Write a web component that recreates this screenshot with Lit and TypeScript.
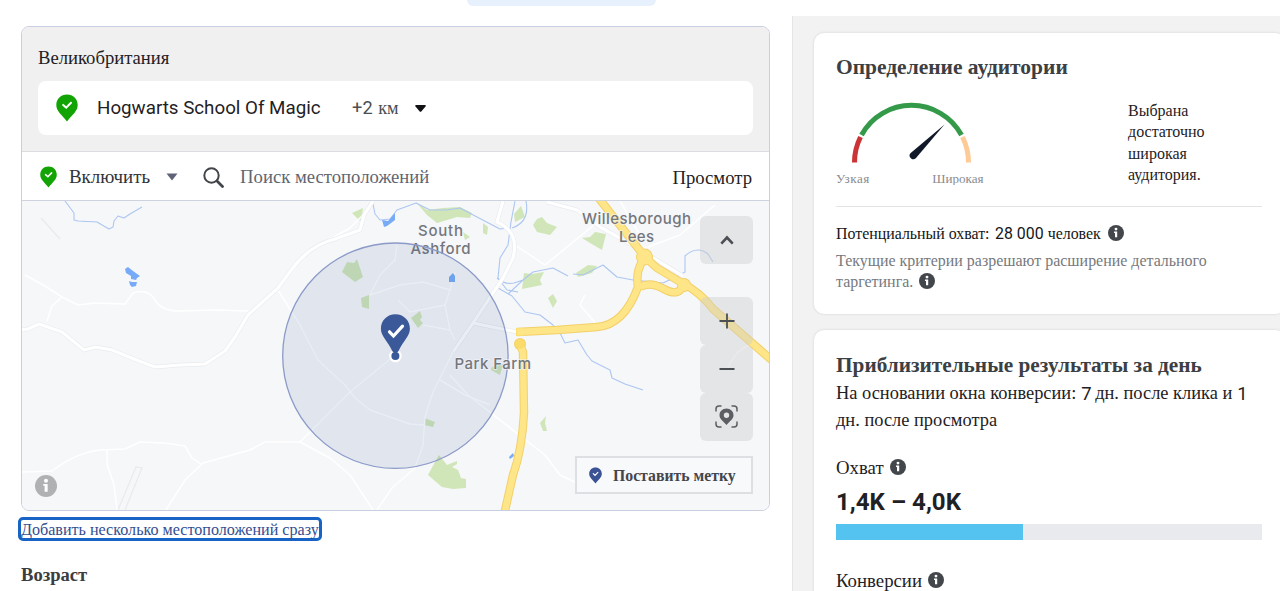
import { LitElement, html, css, svg } from "lit";
import { customElement, property } from "lit/decorators.js";

@customElement("info-dot")
class InfoDot extends LitElement {
  static styles = css`
    :host { display: block; width: 16px; height: 16px; flex: none; }
    .icon { display: block; width: 100%; height: 100%; }
  `;
  @property() tone = "#43474c";
  render() {
    return html`<svg class="icon" viewBox="0 0 16 16">
      <circle cx="8" cy="8" r="8" fill=${this.tone} />
      <circle cx="8" cy="4.1" r="1.45" fill="#fff" />
      <path d="M6 6.500h3.200v5.700H7V7.900H6z" fill="#fff" />
    </svg>`;
  }
}

@customElement("check-pin")
class CheckPin extends LitElement {
  static styles = css`
    :host { display: block; flex: none; }
    .icon { display: block; width: 100%; height: 100%; }
  `;
  @property() tone = "#12a404";
  render() {
    return html`<svg class="icon" viewBox="0 0 22 28">
      <path d="M11 .5C4.900.5.300 5 .300 11c0 6 5.200 9.500 10.700 16.500C16.500 20.500 21.700 17 21.700 11 21.700 5 17.100.5 11 .5z" fill=${this.tone} />
      <path d="M7.200 10.900l3 2.800 4.800-5" fill="none" stroke="#fff" stroke-width="2" stroke-linecap="round" />
    </svg>`;
  }
}

const PARKS = [
  "352,213 363,208 361,222", "416,202 427,210 443,208 460,207 472,213 470,218 457,217 437,223 427,215",
  "483,223 488,227 487,235 483,233", "463,232 470,237 465,240", "342,272 347,262 354,263 357,259 363,277 355,282",
  "361,298 369,295 369,309 362,307", "411,318 420,311 422,317 420,320 423,323 418,328", "492,367 503,364 500,375 491,370",
  "424,418 435,422 433,427 424,425", "428,475 435,462 439,455 447,465 457,461 457,464 452,467 458,470 461,478 466,479 466,488 453,489 442,487",
  "540,423 546,416 545,423 547,431 543,431", "533,225 537,219 542,217 547,223 557,227 550,235 537,232",
  "582,238 590,237 595,232 606,234 602,250 590,243", "524,273 532,274 544,272 540,280 542,285 522,289", "576,273 588,265 597,266 592,273 578,277",
  "548,298 553,294 557,301 553,308", "514,214 521,206 525,217 515,222",
];
const WATER = [
  "125,269 128,267 133,271 140,276 137,278 136,280 131,279 131,276 126,273", "129,281 132,282 137,282 136,286 132,287 130,285",
  "382,220 388,221 395,213 395,220 387,226 384,227", "449,277 453,273 455,276 455,282 449,282", "509,457 513,453 514,456 510,459",
];
const RIVERS = [
  "M65,201L74,213 74,220 78,221 97,222 109,229 113,227 114,221 118,216 124,218 130,214 142,207",
  "M373,204L375,214 380,220 390,219 397,210 416,203 430,210 447,210 460,208 477,217 500,229 508,228",
  "M515,201L511,222 508,245 500,258 498,278 507,290 518,292",
  "M526,201Q530,222 512,228",
  "M497,278Q505,285 514,283L523,280 533,272 553,268 568,276M508,294L523,280",
  "M498,288L512,296 525,312 540,315 553,325 560,333 565,343 578,340 587,355 592,361 610,370 612,378 625,384 643,390",
  "M573,274L583,275 603,265 617,277 633,280 663,283 680,275 685,272 685,256 Q697,245 708,254L713,262",
];
const ROADS = [
  "M21,330L28,329 39,324 62,332 84,350 96,347 112,350 134,359 155,367 180,365 205,364 225,351 235,337 248,315 278,288 292,269Q310,245 335,239L360,230 364,215 373,201",
  "M503,201L497,222 Q520,232 513,258L503,278 473,323 453,352",
  "M473,323L517,332",
  "M547,202L577,210 600,227 620,238 683,276",
];
const LANES = [
  "M25,275L45,286 62,297 78,305 95,303 125,304 133,293Q148,288 155,300T182,311L215,310 249,311",
  "M62,297L52,306 47,321", "M21,472L52,471Q75,453 100,450L125,449 140,442 165,443 185,446 192,458 201,464",
  "M107,450V464L114,485 117,510", "M166,510L185,480 203,463 250,450 265,442 300,442 330,458 350,475 373,510",
  "M377,510L392,488 415,468 423,445 425,417 433,392 453,352", "M300,442L350,392 395,355",
  "M278,290L300,325 318,360 345,385 355,398 370,410 410,424 425,425", "M397,245L395,260 380,275 370,295 400,285 423,282 450,290 445,305 410,312 398,300",
  "M445,305L450,330 423,325M450,290L455,272M450,330L455,340", "M285,280L310,250 350,228 363,215",
  "M450,375L468,395 500,420 545,455 560,475 575,482", "M515,245L545,265 600,220M585,295L580,305 597,325M640,250L680,235 715,205",
  "M727,370Q735,350 750,345M440,380L465,395 490,405M620,201L640,235",
];
const HIGHWAYS = [
  "M597,196L645,257 657,268 682,283 Q700,292 713,309L775,363",
  "M645,257Q635,270 638,287Q624,325 597,327L557,330 517,332",
  "M640,287Q650,281 664,289T683,286",
  "M519,342L523,352 524,413Q522,450 513,475L504,515",
];

@customElement("area-map")
class AreaMap extends LitElement {
  static styles = css`
    :host { display: block; width: 748px; height: 309px; }
    .map { display: block; }
    .label { font: 500 15px Inter, "Liberation Sans", sans-serif; fill: #74767c; stroke: #f5f6f9; stroke-width: 2px; stroke-opacity: .6; paint-order: stroke; }
  `;
  render() {
    const road = (d: string, color: string, w: number) =>
      svg`<path d=${d} fill="none" stroke=${color} stroke-width=${w} stroke-linejoin="round" />`;
    return html`<svg class="map" width="748" height="309" viewBox="22 201 748 309">
      <rect x="21" y="200" width="750" height="312" fill="#f5f7f9" />
      <path d="M41,218L60,239M118,510L136,467 142,468 125,510" fill="none" stroke="#e9eaee" stroke-width="1.200" />
      ${PARKS.map((p) => svg`<polygon points=${p} fill="#d0e6b8" />`)}
      ${LANES.map((d) => road(d, "#fff", 1.5))}
      ${RIVERS.map((d) => road(d, "#adc6f1", 1.1))}
      ${WATER.map((p) => svg`<polygon points=${p} fill="#77abf8" />`)}
      ${ROADS.map((d) => road(d, "#e9ebf0", 4.4))}
      ${ROADS.map((d) => road(d, "#fff", 3.2))}
      ${HIGHWAYS.map((d) => road(d, "#f3d06a", 8.4))}
      <circle cx="644.500" cy="257" r="8.500" fill="#f3d06a" /><circle cx="684" cy="285" r="7" fill="#f3d06a" />
      <rect x="516" y="328" width="8" height="8" fill="#fbdc6b" /><circle cx="520" cy="344" r="6" fill="#f3d06a" />
      ${HIGHWAYS.map((d) => road(d, "#fee587", 6.4))}
      <circle cx="644.500" cy="257" r="7.500" fill="#fee587" /><circle cx="684" cy="285" r="6" fill="#fee587" />
      <circle cx="520" cy="344" r="5" fill="#fbdc6b" />
      <text class="label" x="418" y="236" textLength="45">South</text>
      <text class="label" x="410.500" y="254" textLength="60">Ashford</text>
      <text class="label" x="582" y="224" textLength="109">Willesborough</text>
      <text class="label" x="619" y="242" textLength="35">Lees</text>
      <circle cx="395.400" cy="355.700" r="112.700" fill="#3b5998" fill-opacity=".11" stroke="#8c9ac8" stroke-width="1.300" />
      <text class="label" x="454.500" y="369" textLength="76.500">Park Farm</text>
      <circle cx="395.400" cy="356" r="6.300" fill="#fff" />
      <circle cx="395.400" cy="356" r="4" fill="#3b5998" />
      <path d="M395.400 314.300c-8.300 0-14.500 6.200-14.500 14.500 0 7.500 7 12.500 11.500 22.500l3 3 3-3c4.500-10 11.500-15 11.500-22.500 0-8.300-6.200-14.500-14.500-14.500z" fill="#3b5998" />
      <path d="M389.500 331.800l4 4.200 9-9.800" fill="none" stroke="#fff" stroke-width="3.200" stroke-linecap="round" />
    </svg>`;
  }
}

@customElement("app-root")
class AppRoot extends LitElement {
  static styles = css`
    :host { display: block; width: 1280px; height: 591px; overflow: hidden; background: #fff; font-family: "Liberation Serif", serif; color: #1f2124; }
    * { box-sizing: border-box; }
    .page { display: flex; height: 591px; position: relative; }
    .tab { position: absolute; left: 467px; top: -10px; width: 189px; height: 16px; border-radius: 6px; background: #e7f1fe; }
    .main { width: 792px; flex: none; padding: 26px 0 0 21px; display: flex; flex-direction: column; align-items: flex-start; }
    .t { display: inline-block; white-space: pre; }
    .rb { font-family: Roboto, sans-serif; }
    .panel { width: 749px; height: 485px; border: 1px solid #c9cfe0; border-radius: 8px; overflow: hidden; display: flex; flex-direction: column; }
    .head { height: 125px; background: #f0f0f0; border-bottom: 1px solid #dcdde0; padding: 17px 16px 0; }
    .country { font-size: 18.650px; line-height: 27px; display: block; width: max-content; }
    .place { height: 54px; margin-top: 10px; background: #fff; border-radius: 8px; display: flex; align-items: center; padding-left: 18px; }
    .pin1 { width: 22px; height: 28px; }
    .name { font-size: 18.750px; margin-left: 19px; }
    .radius { margin-left: 31.500px; color: #4b4f54; display: flex; align-items: baseline; }
    .two { font-size: 18.200px; }
    .km { font-size: 18.200px; margin-left: 5.500px; }
    .caret { margin-left: 15.500px; }
    .search { height: 49px; background: #fff; border-bottom: 1px solid #ced3df; display: flex; align-items: center; padding: 2px 17px 0 18px; }
    .pin2 { width: 17px; height: 22px; }
    .incl { font-size: 18.900px; margin-left: 12px; color: #303338; }
    .caret2 { margin-left: 16px; }
    .glass { margin-left: 25px; }
    .ph { font-size: 18.700px; margin-left: 16px; color: #5f6670; }
    .view { font-size: 18.700px; margin-left: auto; padding-top: 2px; }
    .canvas { position: relative; height: 309px; }
    .ctl { position: absolute; left: 678px; width: 53px; height: 48px; border-radius: 6px; background: rgba(205, 206, 208, .42); display: flex; align-items: center; justify-content: center; }
    .up { top: 15px; } .plus { top: 96px; } .minus { top: 144px; } .locate { top: 191.500px; }
    .drop { position: absolute; left: 553px; top: 255px; width: 178px; height: 38px; border: 2px solid #dddfe3; background: #f8f9fb; display: flex; align-items: center; padding-left: 12px; }
    .pin3 { width: 13px; height: 17px; }
    .droptext { font-size: 15.750px; font-weight: 700; color: #43464b; margin-left: 11px; padding-top: 1px; }
    .mapinfo { position: absolute; left: 13px; top: 274px; width: 22px; height: 22px; }
    .link { margin: 6px 0 0 -3px; width: 304px; height: 24px; border: 3px solid #1763c6; border-radius: 5px; line-height: 19px; font-size: 16.100px; color: #344e90; }
    .age { font-size: 18.600px; font-weight: 700; color: #3b3d40; line-height: 24px; margin-top: 22px; }
    .side { flex: 1; min-width: 0; margin-top: 16px; height: 575px; background: #f2f2f2; border-left: 1px solid #e5e5e6; padding: 17px 0 0 21px; display: flex; flex-direction: column; gap: 16px; overflow: hidden; }
    .card { width: 471px; flex: none; background: #fff; border-radius: 10px; padding: 0 22px; box-shadow: 0 0 3px rgba(0, 0, 0, .13); }
    .aud { height: 281px; padding-top: 21px; } .est { height: 300px; padding-top: 22px; }
    .title { font-size: 21.480px; font-weight: 700; line-height: 26px; color: #3c3f43; display: block; width: max-content; }
    .est .title { font-size: 21.290px; }
    .row { display: flex; height: 104px; margin-top: 15px; }
    .gauge { width: 292px; padding-top: 6px; }
    .dial { display: block; }
    .legend { display: flex; height: 17px; overflow: hidden; font-size: 13.100px; line-height: 22px; color: #8a8c8f; justify-content: space-between; width: 147.500px; margin-top: 4.500px; }
    .l1 { letter-spacing: .5px; }
    .verdict { font-size: 16px; line-height: 21.400px; padding-top: 5px; display: flex; flex-direction: column; align-items: flex-start; }
    .hr { width: 426px; height: 1px; background: #e3e4e6; margin-top: 7px; }
    .line { display: flex; align-items: center; }
    .line info-dot { margin: -2px 0 0 6px; }
    .pot { margin-top: 15px; height: 24px; font-size: 15.900px; color: #141619; }
    .digits { margin: -1px 4px 0 5.500px; }
    .pot info-dot { margin: -3px 0 0 7px; }
    .gray { font-size: 15.950px; color: #76797d; height: 21px; }
    .first { margin-top: 4px; }
    .body { font-size: 18.400px; height: 27px; padding-top: 3px; }
    .seven { margin: 0 3.500px 0 5px; } .one { margin-left: 5px; }
    .metric { font-size: 18.800px; height: 27px; margin-top: 22px; }
    .conv { margin-top: 27.500px; }
    .reach { font-size: 24.100px; font-weight: 700; font-family: Roboto, sans-serif; line-height: 30px; height: 30px; margin-top: 6px; display: block; }
    .bar { width: 426px; height: 16px; background: #e9eaee; margin-top: 6.500px; }
    .fill { height: 16px; background: #55c3ef; }
  `;
  render() {
    const t = (s: string, c = "") => html`<span class="t ${c}">${s}</span>`;
    return html`<div class="page">
      <div class="tab"></div>
      <div class="main">
        <div class="panel">
          <div class="head">
            ${t("Великобритания", "country")}
            <div class="place"><check-pin class="pin1"></check-pin>
              ${t("Hogwarts School Of Magic", "name rb")}
              <span class="radius">${t("+2", "two rb")}${t("км", "km")}</span>
              <svg class="caret" width="13" height="9" viewBox="0 0 13 9"><path d="M2 1h9q1.500 0 .5 1.500L7.500 7.300q-1 1-2 0L1.500 2.500q-1-1.500.5-1.500z" fill="#111214" /></svg>
            </div>
          </div>
          <div class="search"><check-pin class="pin2"></check-pin>
            ${t("Включить", "incl")}
            <svg class="caret2" width="12" height="8" viewBox="0 0 12 8"><path d="M.5.500h11L6 7.500z" fill="#606277" /></svg>
            <svg class="glass" width="21" height="21" viewBox="0 0 21 21" fill="none" stroke="#424549"><circle cx="8.500" cy="8.500" r="7.200" stroke-width="2" /><path d="M14 14l5.500 5.500" stroke-width="2.800" stroke-linecap="round" /></svg>
            ${t("Поиск местоположений", "ph")}${t("Просмотр", "view")}
          </div>
          <div class="canvas"><area-map></area-map>
            <div class="ctl up"><svg width="14" height="10" viewBox="0 0 14 10"><path d="M1.300 8.700L7 2.500l5.700 6.200" fill="none" stroke="#4c4f54" stroke-width="2.600" /></svg></div>
            <div class="ctl plus"><svg width="16" height="16" viewBox="0 0 16 16"><path d="M8 .5v15M.5 8h15" stroke="#4c4f54" stroke-width="1.800" /></svg></div>
            <div class="ctl minus"><svg width="16" height="16" viewBox="0 0 16 16"><path d="M.5 8h15" stroke="#4c4f54" stroke-width="1.800" /></svg></div>
            <div class="ctl locate"><svg width="23" height="23" viewBox="0 0 23 23"><path d="M1 6.500V4q0-3 3-3h2.500M16.500 1H19q3 0 3 3v2.500M22 16.500V19q0 3-3 3h-2.500M6.500 22H4q-3 0-3-3v-2.500" fill="none" stroke="#5b5e63" stroke-width="1.500" /><path fill-rule="evenodd" d="M11.500 3.500C7.400 3.500 4.500 6.500 4.500 10.200c0 4 4 5.800 7 9.800 3-4 7-5.800 7-9.800 0-3.700-2.900-6.700-7-6.700zm0 4a2.700 2.700 0 110 5.400 2.700 2.700 0 010-5.400z" fill="#5b5e63" /></svg></div>
            <div class="drop"><check-pin class="pin3" tone="#3b5394"></check-pin>${t("Поставить метку", "droptext")}</div>
            <info-dot class="mapinfo" tone="#b0b1b3"></info-dot>
          </div>
        </div>
        <div class="link">${t("Добавить несколько местоположений сразу")}</div>
        ${t("Возраст", "age")}
      </div>
      <div class="side">
        <div class="card aud">
          ${t("Определение аудитории", "title")}
          <div class="row">
            <div class="gauge">
              <svg class="dial" width="150" height="62" viewBox="836 100.500 150 62">
                <g fill="none" stroke-width="5">
                  <path d="M854.500 162A57 57 0 0 1 860.500 136.500" stroke="#cb3336" />
                  <path d="M861.500 134.500A57 57 0 0 1 961.500 134.500" stroke="#349a49" />
                  <path d="M962.500 136.500A57 57 0 0 1 968.500 162" stroke="#fdcb98" />
                </g>
                <path d="M944.500 124L916 157.500a3.600 3.600 0 1 1-5.300-5z" fill="#111827" />
              </svg>
              <div class="legend">${t("Узкая", "l1")}${t("Широкая")}</div>
            </div>
            <div class="verdict">${t("Выбрана")}${t("достаточно")}${t("широкая")}${t("аудитория.")}</div>
          </div>
          <div class="hr"></div>
          <div class="line pot">${t("Потенциальный охват:")}${t("28 000", "digits rb")}${t("человек")}<info-dot></info-dot></div>
          <div class="line gray first">${t("Текущие критерии разрешают расширение детального")}</div>
          <div class="line gray">${t("таргетинга.")}<info-dot></info-dot></div>
        </div>
        <div class="card est">
          ${t("Приблизительные результаты за день", "title")}
          <div class="line body">${t("На основании окна конверсии:")}${t("7", "seven rb")}${t("дн. после клика и")}${t("1", "one rb")}</div>
          <div class="line body">${t("дн. после просмотра")}</div>
          <div class="line metric">${t("Охват")}<info-dot></info-dot></div>
          ${t("1,4K – 4,0K", "reach")}
          <div class="bar"><div class="fill" style="width:44%"></div></div>
          <div class="line metric conv">${t("Конверсии")}<info-dot></info-dot></div>
        </div>
      </div>
    </div>`;
  }
}
